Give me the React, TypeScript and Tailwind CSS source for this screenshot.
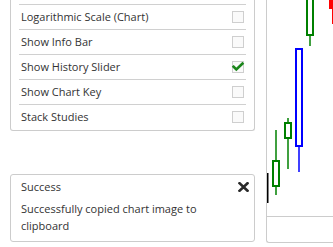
import React from "react";

const rows: { label: string; checked: boolean }[] = [
  { label: "Logarithmic Scale (Chart)", checked: false },
  { label: "Show Info Bar", checked: false },
  { label: "Show History Slider", checked: true },
  { label: "Show Chart Key", checked: false },
  { label: "Stack Studies", checked: false },
];

function Checkbox({ checked }: { checked: boolean }) {
  return (
    <div className="w-[12px] h-[12px] border border-[#cfcfcf] bg-[#fafafa] flex items-center justify-center">
      {checked && (
        <svg width="12" height="12" viewBox="0 0 12 12" className="overflow-visible">
          <path d="M1.6 5.8 L4.3 8.4 L10.4 2.6" fill="none" stroke="#1a861a" strokeWidth="2.6" strokeLinecap="square" />
        </svg>
      )}
    </div>
  );
}

export default function App() {
  return (
    <div
      className="w-[333px] h-[247px] bg-white overflow-hidden flex text-[#333333] text-[11px]"
      style={{ fontFamily: '"Open Sans", "Liberation Sans", sans-serif' }}
    >
      <div className="ml-[10px] w-[245px] shrink-0 flex flex-col">
        <div className="border-x border-b border-[#cccccc] rounded-b-[3px] px-[8px] pb-[1px]">
          <div className="h-[4px]" />
          {rows.map((r) => (
            <div key={r.label} className="h-[25px] border-t border-[#d0d0d0] flex items-center justify-between pl-[2px] pr-[2px]">
              <span className="leading-[16px]">{r.label}</span>
              <Checkbox checked={r.checked} />
            </div>
          ))}
        </div>
        <div className="mt-[43px] h-[68px] border border-[#cccccc] rounded-[3px] pl-[10px] pr-[5px] pt-[3px]">
          <div className="flex items-center justify-between h-[17px] leading-[17px]">
            <span>Success</span>
            <svg width="11" height="10" viewBox="0 0 11 10">
              <path d="M1.5 1.2 L9.5 8.8 M9.5 1.2 L1.5 8.8" stroke="#2a2a2a" strokeWidth="2.6" strokeLinecap="square" />
            </svg>
          </div>
          <div className="mt-[5px] leading-[17px] pr-[4px]">
            Successfully copied chart image to clipboard
          </div>
        </div>
      </div>
      <div className="ml-[11px] w-[100px] h-[243px] shrink-0 border-l border-b border-[#cccccc] rounded-bl-[3px] flex flex-col">
        <div className="h-[216px] relative overflow-hidden">
          <svg width="66" height="216" viewBox="267 0 66 216" className="absolute left-0 top-0">
            <rect x="267" y="173" width="1.5" height="30" fill="#000000" />
            <line x1="276" y1="130" x2="276" y2="195" stroke="#008000" strokeWidth="1.5" />
            <rect x="273" y="161" width="6" height="25" fill="#ffffff" stroke="#008000" strokeWidth="2" />
            <line x1="288" y1="118" x2="288" y2="169" stroke="#008000" strokeWidth="1.5" />
            <rect x="285" y="123" width="6" height="15" fill="#ffffff" stroke="#008000" strokeWidth="2" />
            <line x1="299" y1="140" x2="299" y2="172" stroke="#0000ff" strokeWidth="1.5" />
            <rect x="296" y="49" width="6" height="97" fill="#ffffff" stroke="#0000ff" strokeWidth="2" />
            <line x1="310" y1="30" x2="310" y2="46" stroke="#008000" strokeWidth="1.5" />
            <rect x="307" y="-5" width="6" height="40" fill="#ffffff" stroke="#008000" strokeWidth="2" />
            <rect x="329" y="-5" width="10" height="14" fill="#ff0000" />
            <line x1="332.5" y1="5" x2="332.5" y2="24" stroke="#ff0000" strokeWidth="1" />
          </svg>
        </div>
        <div className="flex-1 border-t border-[#cccccc]" />
      </div>
    </div>
  );
}
